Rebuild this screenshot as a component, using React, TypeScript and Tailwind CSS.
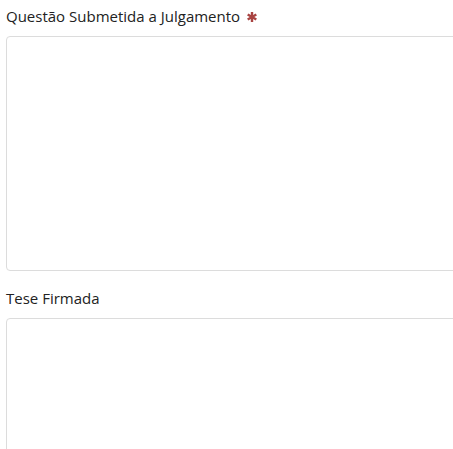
export default function App() {
  return (
    <div className="w-[453px] h-[449px] overflow-hidden bg-white font-['Open_Sans',sans-serif] text-[15px] text-[#222]">
      <div className="pl-[6px] pt-[5px]">
        <label className="flex items-center leading-[22px] mb-[9px]">
          Questão Submetida a Julgamento
          <svg className="ml-[7px] mt-[2px]" width="10" height="10" viewBox="0 0 10 10">
            <g stroke="#a94442" strokeWidth="2.4" strokeLinecap="butt">
              <line x1="5" y1="0" x2="5" y2="10" />
              <line x1="0.7" y1="2.5" x2="9.3" y2="7.5" />
              <line x1="0.7" y1="7.5" x2="9.3" y2="2.5" />
            </g>
          </svg>
        </label>
        <textarea className="block w-[470px] h-[235px] border border-[#dcdcdc] rounded-[4px] resize-none outline-none" />
        <label className="block leading-[22px] mt-[16px] mb-[9px]">Tese Firmada</label>
        <textarea className="block w-[470px] h-[235px] border border-[#dcdcdc] rounded-[4px] resize-none outline-none" />
      </div>
    </div>
  );
}
